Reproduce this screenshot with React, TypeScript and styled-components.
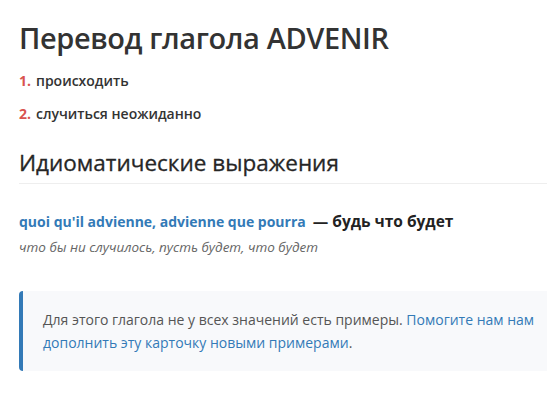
import React from 'react';
import styled, { createGlobalStyle } from 'styled-components';

const GlobalStyle = createGlobalStyle`
  html, body {
    margin: 0;
    padding: 0;
    background: #fff;
    overflow: hidden;
  }
  body {
    font-family: "Open Sans", "Noto Sans", "DejaVu Sans", sans-serif;
    color: #333;
  }
`;

const Page = styled.div`
  padding: 14px 0 0 19px;
`;

const Title = styled.h1`
  margin: 0;
  font-size: 29px;
  font-weight: 600;
  line-height: 48px;
  color: #333;
  letter-spacing: -0.4px;
`;

const Meanings = styled.ol`
  list-style: none;
  margin: 2px 0 0;
  padding: 0;
`;

const Meaning = styled.li`
  display: flex;
  gap: 5px;
  font-size: 14px;
  font-weight: 600;
  line-height: 33px;
  color: #333;
`;

const Num = styled.span`
  color: #d9534f;
  font-weight: 700;
`;

const Section = styled.h2`
  margin: 16px 0 0;
  padding-bottom: 3px;
  font-size: 22.5px;
  font-weight: 400;
  line-height: 34px;
  color: #262626;
  border-bottom: 1px solid #eee;
  -webkit-text-stroke: 0.3px #262626;
`;

const Idiom = styled.div`
  margin-top: 26px;
`;

const IdiomLine = styled.div`
  font-size: 14px;
  font-weight: 700;
  line-height: 22px;
  color: #222;
`;

const Phrase = styled.a`
  color: #337ab7;
  text-decoration: none;
  margin-right: 7px;
`;

const Translation = styled.span`
  font-size: 15.5px;
`;

const Gloss = styled.div`
  font-size: 13.5px;
  font-style: italic;
  line-height: 20px;
  color: #666;
  margin-top: 4px;
`;

const Note = styled.div`
  margin-top: 34px;
  padding: 17px 6px 17px 20px;
  background: #f8f9fb;
  border-left: 4px solid #337ab7;
  border-radius: 4px 0 0 4px;
  font-size: 14px;
  line-height: 23px;
  color: #555;
`;

const NoteLink = styled.a`
  color: #337ab7;
  text-decoration: none;
`;

export default function App() {
  return (
    <>
      <GlobalStyle />
      <Page>
        <Title>Перевод глагола ADVENIR</Title>
        <Meanings>
          <Meaning><Num>1.</Num>происходить</Meaning>
          <Meaning><Num>2.</Num>случиться неожиданно</Meaning>
        </Meanings>
        <Section>Идиоматические выражения</Section>
        <Idiom>
          <IdiomLine>
            <Phrase href="#">quoi qu'il advienne, advienne que pourra</Phrase>
            <Translation>— будь что будет</Translation>
          </IdiomLine>
          <Gloss>что бы ни случилось, пусть будет, что будет</Gloss>
        </Idiom>
        <Note>
          Для этого глагола не у всех значений есть примеры.{' '}
          <NoteLink href="#">Помогите нам нам дополнить эту карточку новыми примерами</NoteLink>.
        </Note>
      </Page>
    </>
  );
}
